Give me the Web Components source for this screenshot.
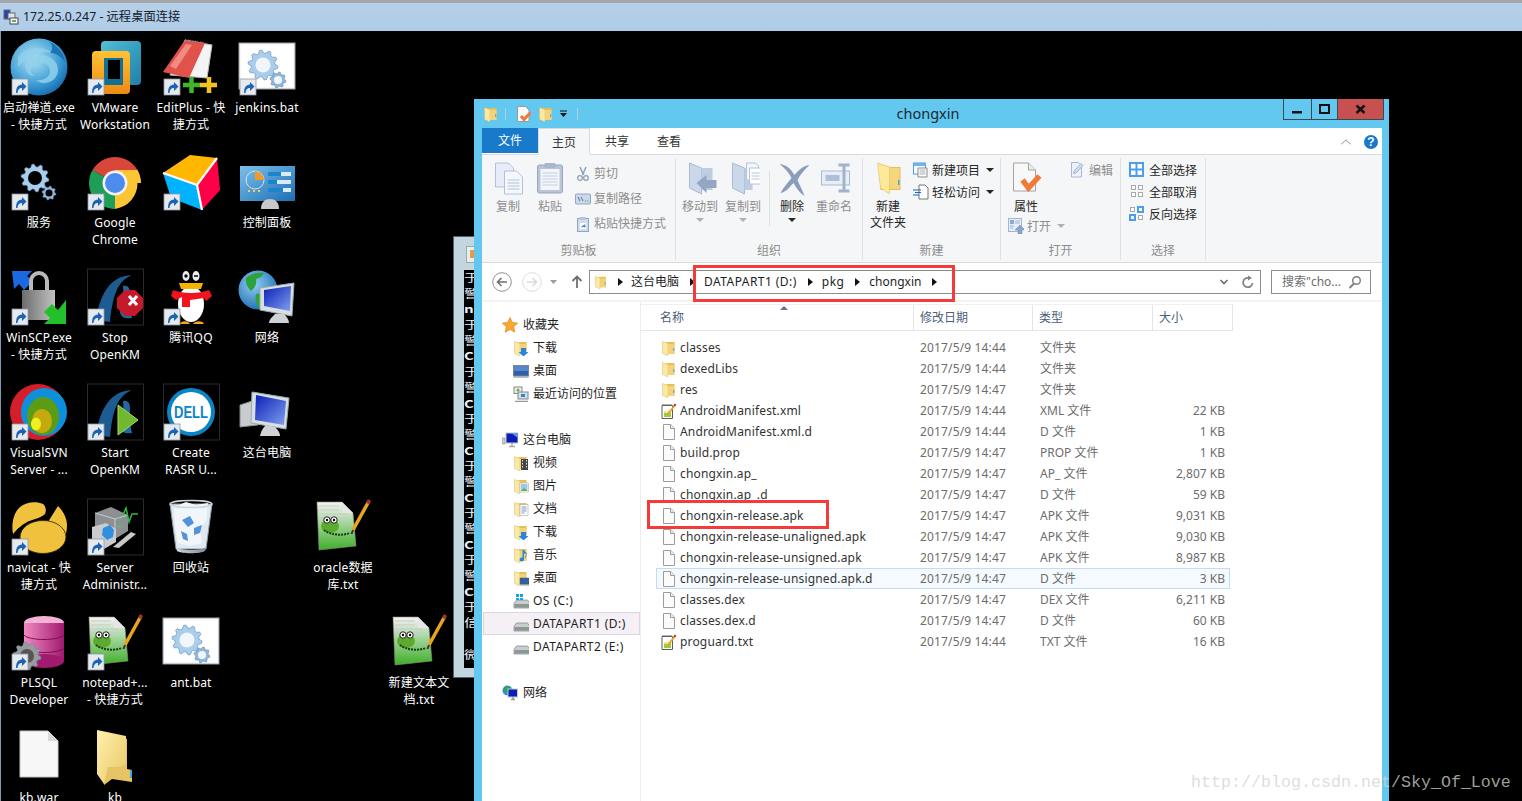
<!DOCTYPE html>
<html lang="zh-CN">
<head>
<meta charset="utf-8">
<title>172.25.0.247 - 远程桌面连接</title>
<style>
  html, body { margin: 0; height: 801px; overflow: hidden; background: #000; }
  body { display: flex; flex-direction: column; font: 12px/17px "Noto Sans", "Noto Sans CJK SC", sans-serif; }
</style>
</head>
<body>
<rdp-titlebar>172.25.0.247 - 远程桌面连接</rdp-titlebar>
<rdp-desktop></rdp-desktop>

<script>
// ---- drawing helpers ----
function gear(cx, cy, r, teeth, fill, hole) {
  let d = '';
  const n = teeth * 4;
  for (let i = 0; i < n; i++) {
    const a = (i + 0.5) / n * Math.PI * 2;
    const rr = (i % 4 < 2) ? r : r * 0.8;
    d += (i ? 'L' : 'M') + (cx + rr * Math.cos(a)).toFixed(1) + ' ' + (cy + rr * Math.sin(a)).toFixed(1);
  }
  return `<path d="${d}z" fill="${fill}" stroke="#5f86ad" stroke-width=".6"/><circle cx="${cx}" cy="${cy}" r="${r * 0.5}" fill="${hole}"/>`;
}
const svg = (w, h, vw, vh, body) => `<svg width="${w}" height="${h}" viewBox="0 0 ${vw} ${vh}" xmlns="http://www.w3.org/2000/svg">${body}</svg>`;

const shortcut = `<rect x="2" y="41" width="16" height="16" fill="#e6eaee" stroke="#8f9aa5" stroke-width=".8"/><path d="M6 55c0-6 2-8 6-8.500V44l4.500 4.500L12 53v-3c-3 0-4 1.500-4.500 5z" fill="#1c63b8"/>`;

const grad = (id, a, b, x2 = 0, y2 = 1) => `<linearGradient id="${id}" x1="0" y1="0" x2="${x2}" y2="${y2}"><stop offset="0" stop-color="${a}"/><stop offset="1" stop-color="${b}"/></linearGradient>`;

const batBody = `<rect x="1" y="5" width="56" height="46" fill="#f6f7fb" stroke="#9aa0a6"/><rect x="3" y="7" width="52" height="42" fill="#fff"/>` +
  gear(25, 27, 15, 10, '#a9cdec', '#f2f6fa') + gear(40, 42, 8, 8, '#8fb8dc', '#f2f6fa');

const nppBody = `<defs>${grad('ng', '#f4f4f4', '#3fae2a')}</defs>
  <path d="M3 4h25l11 11 3 33L5 52z" fill="url(#ng)" stroke="#8a8f80" stroke-width=".6"/>
  <path d="M28 4v11h11z" fill="#e4e6e8"/>
  <path d="M5 8h20M5 12h20M5 16h28M5 20h30" stroke="#c9c9c9"/>
  <ellipse cx="16" cy="28" rx="9" ry="7" fill="#5cab2f"/><circle cx="13" cy="22" r="3.200" fill="#fff" stroke="#222"/><circle cx="20" cy="22" r="3.200" fill="#fff" stroke="#222"/>
  <circle cx="13" cy="22" r="1.200"/><circle cx="20" cy="22" r="1.200"/>
  <path d="M10 32c6 5 18 6 26 3" stroke="#1d3a12" stroke-width="2" fill="none" stroke-dasharray="2 1"/>
  <path d="M39 32 L55 3" stroke="#e9a51c" stroke-width="3.500"/><path d="M53.500 5.500 55.500 2" stroke="#a0342c" stroke-width="3.500"/><path d="M39 32l-1.500 4" stroke="#333" stroke-width="2"/>`;

const openkm = `<rect x="1.500" y="1" width="56" height="56" fill="#000" stroke="#2a2a2a"/>
  <path d="M10 52C14 26 24 8 46 7 34 12 27 22 24 54z" fill="#1d5c92"/>
  <path d="M34 44c3-8 4-16 3-26 6-1 7 3 7 8-1 8 0 16 2 24-6 1-11 0-12-6z" fill="#23699f"/>`;

const desktopIcons = {
  chanzhi: `<defs><radialGradient id="cz" cx=".4" cy=".35" r=".75"><stop offset="0" stop-color="#b5e3f4"/><stop offset=".6" stop-color="#3f9fd6"/><stop offset="1" stop-color="#0a5ea6"/></radialGradient></defs>
    <circle cx="29" cy="29" r="28.500" fill="url(#cz)"/>
    <path d="M8 19c8-10 24-13 36-3-6-3-16-3-20 3 10-5 24 1 24 13 0 11-14 17-22 10 8 1 14-3 14-9 0-8-12-12-18-4-2 3-1 8 3 9-8 0-12-8-9-15-3 1-6 3-8 6z" fill="#8fd0ea" opacity=".85"/>
    <path d="M40 4c8 4 14 12 15 20-5-7-10-9-15-9 3-3 3-7 0-11z" fill="#1b74b6"/>`,
  vmware: `<defs>${grad('vb', '#52bfd8', '#1f7fa7', 1, 1)}${grad('vo', '#ffc233', '#ee8a12')}</defs>
    <rect x="15" y="3" width="40" height="44" rx="4" fill="url(#vb)"/><rect x="6" y="13" width="38" height="43" rx="4" fill="url(#vo)"/>
    <rect x="18" y="20" width="19" height="27" fill="#146f95"/><rect x="22" y="22" width="12" height="19" fill="#000"/>`,
  editplus: `<path d="M23 2 50 7 45 40 8 37z" fill="#f4f4f4" stroke="#bbb"/><path d="M1 34 23 2 43 5 27 40z" fill="#e0524a"/><path d="M8 28 24 6l6 1-16 24z" fill="#f08a82"/>
    <path d="M23 2 43 5" stroke="#888" stroke-dasharray="1 1.500" stroke-width="2"/>
    <path d="M21 47h17M29.500 39v16" stroke="#3fb52c" stroke-width="4.500"/><path d="M38 47h17M47 39v16" stroke="#f2c51c" stroke-width="4.500"/>`,
  bat: batBody,
  services: gear(25, 25, 14, 10, '#a9cdec', '#000') + gear(39, 40, 7, 8, '#8fb8dc', '#000'),
  chrome: `<path d="M29 30 6.500 17A26 26 0 0 1 51.500 17z" fill="#d8473a"/><path d="M29 30 6.500 17A26 26 0 0 0 29 56z" fill="#1e9e58"/><path d="M29 30H51.500A26 26 0 0 1 29 56zM29 30V17H51.500A26 26 0 0 1 55 30z" fill="#fbc534"/>
    <circle cx="29" cy="30" r="12.500" fill="#f2f2f2"/><circle cx="29" cy="30" r="10" fill="#4c8bf0"/>`,
  cube: `<path d="M1 20 28 2 55 5 35 32z" fill="#ffb700"/><path d="M1 20 35 32 40 57 9 45z" fill="#00b3ff"/><path d="M35 32 55 5 58 37 40 57z" fill="#ff0048"/>
    <path d="M1 20 35 32 55 5M35 32 40 57" stroke="#fff" stroke-width="2.200" fill="none"/>`,
  panel: `<defs>${grad('cp', '#7cc0ea', '#1d6eb4', 1, 1)}</defs><rect x="2" y="13" width="55" height="35" fill="url(#cp)"/>
    <circle cx="17" cy="27" r="9" fill="none" stroke="#cfe6f6"/><path d="M17 18a9 9 0 0 1 9 9h-9z" fill="#f09a2e"/>
    <g fill="#d8ecf8"><rect x="30" y="19" width="23" height="4"/><rect x="30" y="27" width="23" height="4"/><rect x="30" y="35" width="23" height="4"/></g>
    <g fill="#1c84cc"><rect x="30" y="19" width="13" height="4"/><rect x="30" y="27" width="9" height="4"/><rect x="30" y="35" width="15" height="4"/></g>
    <path d="M10 38h2M15 38h2M20 38h2" stroke="#f2d060" stroke-width="2"/><path d="M23 56c0-7 4-10 9-10s9 3 9 10z" fill="#c9c9c9"/>`,
  winscp: `<path d="M2 3h20L17 8l6 5-9 9-5-6-5 5z" fill="#1b68e0"/>
    <path d="M21 22v-9a8 8 0 0 1 16 0v9" fill="none" stroke="#b9b9b9" stroke-width="4"/>
    <defs>${grad('wl', '#6c6c6c', '#c2c2c2', 1, 0)}</defs><rect x="12" y="22" width="33" height="30" fill="url(#wl)"/>
    <path d="M56 32v24H34l6-6-6-6 8-8 6 6z" fill="#22c02a"/>`,
  stopkm: openkm + `<path d="M36 26h10l8 8v10l-8 8H36l-8-8V34z" transform="translate(3 -4)" fill="#c41a2c"/><path d="M43 29l8 9M51 29l-8 9" transform="translate(0 -1)" stroke="#fff" stroke-width="3"/>`,
  qq: `<ellipse cx="29" cy="32" rx="17" ry="24" fill="#000"/><ellipse cx="24" cy="8" rx="3.500" ry="5" fill="#eee"/><ellipse cx="34" cy="8" rx="3.500" ry="5" fill="#eee"/><circle cx="24" cy="8" r="1.700"/><path d="M32 8h4" stroke="#000" stroke-width="1.500"/>
    <ellipse cx="29" cy="36" rx="13" ry="18" fill="#fff"/>
    <path d="M11 22c10 4 26 4 36 0l3 6-6 5-2-3-14 2v7h-8v-10l-6 3-5-4z" fill="#f0141e"/><path d="M17 15h24l-2 6H19z" fill="#f6b400"/>
    <path d="M18 56c2-4 8-3 10 0zM31 56c2-3 9-4 11 0z" fill="#f5a623"/>`,
  network: `<defs><radialGradient id="ngl" cx=".4" cy=".35" r=".8"><stop offset="0" stop-color="#8fd0f4"/><stop offset="1" stop-color="#0d5ea8"/></radialGradient>${grad('mo', '#0a1fb8', '#7fa0ee', 1, 1)}</defs>
    <circle cx="20" cy="22" r="19.500" fill="url(#ngl)"/><path d="M8 10c6-5 12-6 18-5-2 4-5 5-8 6 1 5-1 9-5 12-3-3-6-8-5-13zM18 26c4-1 7 1 7 5 0 4-2 8-5 8-2-4-3-9-2-13z" fill="#2da23c"/>
    <path d="M22 20 56 15l-2 33-32-6z" fill="#d9dee2" stroke="#9aa"/><path d="M26 22 53 18l-1 25-26-5z" fill="url(#mo)"/><path d="M37 46c-4 4-6 6-6 9h20c0-3-2-6-5-9z" fill="#cfd3d6"/>`,
  svn: `<circle cx="28" cy="29" r="28" fill="#d41f2a"/><ellipse cx="34" cy="29" rx="23" ry="24" fill="#0d8fdc"/><ellipse cx="33" cy="33" rx="16" ry="19" fill="#5a9c14"/><ellipse cx="32" cy="38" rx="10" ry="12" fill="#c4a90f"/><ellipse cx="26" cy="41" rx="5" ry="6.500" fill="#f0f020"/>`,
  startkm: openkm + `<path d="M32 22 52 37 32 52z" fill="#6fb92e" stroke="#a6d76a"/>`,
  dell: `<rect x="1.500" y="1" width="56" height="56" fill="#000" stroke="#2a2a2a"/><circle cx="29" cy="29" r="24" fill="#0a84c6"/><circle cx="29" cy="29" r="20" fill="#fff"/>
    <text x="29" y="35" text-anchor="middle" font-family="'Liberation Sans',sans-serif" font-weight="700" font-size="16" fill="#0a84c6" textLength="34" lengthAdjust="spacingAndGlyphs">DELL</text>`,
  computer: `<defs>${grad('mo2', '#0a1fb8', '#7fa0ee', 1, 1)}</defs><path d="M2 22 20 16v26L2 44z" fill="#c9ccce" stroke="#888"/>
    <path d="M14 9 51 15 48 46 13 40z" fill="#d9dee2" stroke="#9aa"/><path d="M18 12 48 18 46 42 17 37z" fill="url(#mo2)"/><path d="M28 42c-4 4-5 7-6 11h20c0-4-3-7-5-9z" fill="#cfd3d6"/>`,
  navicat: `<g fill="#f0c13c"><path d="M3 36C1 25 4 14 10 9c6-5 16-6 23-3 2 1 4 6 2 10-6 5-12 5-18 8-5 3-9 6-14 12z"/>
    <path d="M38 24 48 8c5 5 9 12 9 19 0 5-1 9-2 12-3-7-9-12-17-15z"/></g>
    <ellipse cx="33" cy="39" rx="23" ry="16.500" fill="#f0c13c" stroke="#2a2000" stroke-width=".8"/>`,
  server: `<rect x="1.500" y="1" width="56" height="56" fill="#000" stroke="#2a2a2a"/>
    <path d="M9 15 25 9l17 8v16l-13 8-20-10z" fill="#8d8f93"/><path d="M9 15l20 6 13-4M29 21v20" stroke="#c8cacc" fill="none"/>
    <path d="M32 20l3 1M32 28l3 1" stroke="#42d45a" stroke-width="1.500"/>
    <path d="M6 29l14-4 10 6v13l-12 7-12-6z" fill="#c9cbce"/><path d="M17 30l7-3 4 5-1 7-6 3-5-5z" fill="#2f8fe0"/>
    <path d="M37 17l3-7 3 14 3-8h6" stroke="#2fb84a" stroke-width="1.500" fill="none"/><path d="M27 49 45 34l5 2-17 14z" fill="#c8c8c8"/>`,
  bin: `<defs>${grad('bb', '#cdd7e0', '#7f8a96', 1, 0)}</defs>
    <path d="M8 6h42l-6 45H14z" fill="#dfe9f2" stroke="#8f99a3"/>
    <path d="M12 9l12-5 10 3 12-2-2 18-6 8 2 14-12 3-12-3-3-16z" fill="#f2f6fa"/>
    <path d="M20 22l8-4 4 7-6 4zM32 30l8-3-2 8-6 2zM19 33l6 3 1 7-5-2z" fill="#4f93d8"/>
    <ellipse cx="29" cy="6" rx="21" ry="3.500" fill="none" stroke="#d0d5da" stroke-width="1.500"/>
    <path d="M14 49c4 4 26 4 30 0l-1 4c-4 3-24 3-28 0z" fill="url(#bb)"/>`,
  npp: nppBody,
  plsql: `<defs>${grad('db', '#f28ac2', '#a01a70', 1, 0)}</defs><ellipse cx="34" cy="10" rx="20" ry="7" fill="#f3b2d6"/><rect x="14" y="10" width="40" height="38" fill="url(#db)"/><ellipse cx="34" cy="48" rx="20" ry="7" fill="#a01a70"/>
    <path d="M14 22c5 6 35 6 40 0M14 35c5 6 35 6 40 0" stroke="#7a0f54" fill="none"/>` + gear(17, 43, 14, 10, '#9b9b9b', '#555'),
  blank: `<path d="M10 3h28l10 10v36H10z" fill="#f7f7f7" stroke="#c8c8c8"/><path d="M38 3v10h10z" fill="#d9d9d9"/>`,
  folder: `<defs>${grad('fo', '#fff0ad', '#e8c866', 1, 1)}</defs><path d="M16 8l25 3v30l5 1v12l-20-3-8 6z" fill="#e6c463"/><path d="M11 2 40 8v28l-6 3-12 0-4 17L11 46z" fill="url(#fo)"/><rect x="44" y="42" width="2" height="8" fill="#4aa3df"/>`
};

// small icons, 16x16
const smallFolder = `<path d="M1.500 3 8 2h5.500v12H3z" fill="#e8bf56"/><path d="M1.500 1.500 7 3.500V16L1.500 13.500z" fill="#fbe9a3" stroke="#d4b15a" stroke-width=".4"/><path d="M7 4h6.500v10H7z" fill="#f2d37a"/><rect x="12.200" y="8" width="1" height="3" fill="#5a9fd4"/>`;
const smallDrive = `<path d="M1 10.500 3.500 7h11L17 10.500V15H1z" fill="#c9cdcf" stroke="#7c8185" stroke-width=".7"/><path d="M1.400 11h15.200v3.600H1.400z" fill="#8f9699"/><rect x="13" y="12" width="2" height="1.500" fill="#58c04a"/>`;
const smallIcons = {
  folder: smallFolder,
  file: `<path d="M2.500.5h7.300l3.700 3.700v11.300h-11z" fill="#fcfbfc" stroke="#9c9c9c"/><path d="M9.500.5v4h4" fill="#eee" stroke="#9c9c9c"/>`,
  note: `<path d="M1 2.500h10.500V15.500H1z" fill="#fff" stroke="#5c5c5c"/><path d="M2 1v2M4 1v2M6 1v2M8 1v2M10 1v2" stroke="#666"/><path d="M3 8h7v6H3z" fill="#9ccb3c"/><path d="M3 8h7v2H3z" fill="#f2ec70"/><path d="M7 11 14 2" stroke="#ef9f22" stroke-width="2"/><path d="M13.300 2.800 14.600 1.200" stroke="#a33" stroke-width="2"/>`,
  star: `<path d="M8 .5l2.300 5 5.400.6-4 3.700 1.100 5.400L8 12.500l-4.800 2.700 1.100-5.400-4-3.700 5.400-.6z" fill="#f8a92c" stroke="#d97a1a" stroke-width=".6"/>`,
  downloads: smallFolder + `<path d="M8 8h5v4h2.500l-5 4.500-5-4.500H8z" fill="#2a86dc"/>`,
  desk: `<rect x=".5" y="2.500" width="15" height="10.500" fill="#2f5fa8" stroke="#7a8591"/><path d="M1 3h14v5H1z" fill="#5687cb"/><rect x=".5" y="13" width="15" height="1.800" fill="#a9b0b7"/>`,
  deskf: smallFolder + `<rect x="7" y="8" width="9" height="6" fill="#2f5fa8" stroke="#555" stroke-width=".5"/><rect x="7" y="14" width="9" height="1.500" fill="#999"/>`,
  recent: `<rect x="1" y="1" width="8" height="6.500" fill="#eee" stroke="#888"/><rect x="5" y="6" width="10" height="7" fill="#cfe0ee" stroke="#888"/><rect x="8" y="8" width="4" height="3" fill="#3b83c4"/><path d="M2 15.500h13" stroke="#999" stroke-width="1.500"/><circle cx="5" cy="4" r="1.500" fill="#6bb04a"/>`,
  pc: `<rect x="0" y="6" width="3" height="6" fill="#cfcfcf" stroke="#777" stroke-width=".5"/><rect x="4" y="1" width="12" height="10" fill="#0a1fb8" stroke="#bfc5ca"/><path d="M9 1h7v5z" fill="#6b8fe8"/><path d="M7 14.500h6M10 11v3" stroke="#aaa" stroke-width="1.500"/>`,
  video: smallFolder + `<rect x="8" y="4" width="7" height="11" fill="#444"/><path d="M9 5h1v1.500H9zM13 5h1v1.500h-1zM9 8h1v1.500H9zM13 8h1v1.500h-1zM9 11h1v1.500H9zM13 11h1v1.500h-1z" fill="#ddd"/>`,
  pics: smallFolder + `<rect x="7" y="5" width="8.500" height="9" fill="#fff" stroke="#999" stroke-width=".5"/><rect x="8" y="6" width="6.500" height="7" fill="#9cc7e8"/><path d="M8 13l3-3 3.500 3z" fill="#6aa84a"/>`,
  docs: smallFolder + `<rect x="7" y="3.500" width="8" height="11" fill="#fff" stroke="#999" stroke-width=".5"/><path d="M8.500 6h5M8.500 8h5M8.500 10h5M8.500 12h3" stroke="#5a7fb0" stroke-width=".8"/>`,
  music: smallFolder + `<path d="M11 3v9.500a2.200 2 0 1 1-1.500-1.900V3h1.500c1 2 3 2.500 3 5-1-1.500-2-1.500-3-1.500z" fill="#2a86dc"/>`,
  os: smallDrive + `<path d="M3 1h3v3H3zM7 1h3v3H7zM3 5h3v2H3zM7 5h3v2H7z" fill="#12a5e6"/>`,
  drive: smallDrive,
  net: `<circle cx="5.500" cy="5.500" r="5" fill="#2b8fd4"/><path d="M2 3c2-2 5-2 6-1L6 5 4 8zM6 7l2 1-1 2.500z" fill="#37a63a"/><rect x="6" y="4" width="9.500" height="8" fill="#0a1fb8" stroke="#c5cbd0"/><path d="M9 14.500h4M11 12v2.500" stroke="#999" stroke-width="1.500"/>`,
  qdoc: `<path d="M1.500.5h8l3.500 3.500v11.500h-11.500z" fill="#fafafa" stroke="#9a9a9a"/><path d="M5 10l3 3.500 6.500-7" stroke="#ee7a3c" stroke-width="3" fill="none"/>`,
  cut: `<path d="M5 1l3.500 8M11 1 7.500 9" stroke="#8fa0b6" stroke-width="1.500"/><circle cx="5" cy="12" r="2.300" fill="none" stroke="#8fa0b6" stroke-width="1.300"/><circle cx="11" cy="12" r="2.300" fill="none" stroke="#8fa0b6" stroke-width="1.300"/>`,
  copypath: `<rect x=".5" y="3" width="15" height="10" rx="1" fill="#c9d8ec" stroke="#93a6c4"/><path d="M3 6l2 4M6 6l2 4M10 10h1M12.500 10h1" stroke="#5f7390"/>`,
  pasteshort: `<rect x="2.500" y="2.500" width="11" height="13" fill="#cfdcee" stroke="#93a6c4"/><rect x="5" y="1" width="6" height="3" fill="#b7c6dc"/><rect x="5" y="7" width="6" height="6" fill="#fff"/><path d="M6.500 12c0-2 1-3 2.500-3v-1l2 2-2 2v-1c-1 0-1.500.2-2.500 1z" fill="#5f88bd"/>`,
  newitem: `<rect x=".5" y="1" width="12" height="11" fill="#f5fbff" stroke="#4e9bd8"/><path d="M.5 1h12v3H.5z" fill="#73b4e6"/><path d="M5 6h9v9H5z" fill="#fff" stroke="#8a8a8a"/><path d="M6.500 8h6M6.500 10h6M6.500 12h6" stroke="#aaa"/>`,
  easy: `<path d="M6 1h6l3 3v11H6z" fill="#fff" stroke="#777"/><path d="M0 6h8M2 8.500h6M0 11h6" stroke="#1766c2" stroke-width="1.200"/>`,
  open: `<rect x=".5" y=".5" width="13" height="13" fill="#e4edf8" stroke="#a4b5cc"/><rect x="2" y="2" width="4" height="4" fill="#8fa9cb"/><path d="M7 3h5M7 5h5M2 8h4M2 10h3" stroke="#a4b5cc"/><path d="M12 7l5 5h-3v4h-4v-4H7z" fill="#8ba6c8" stroke="#6f8cb1" stroke-width=".5"/>`,
  edit: `<path d="M1.500.5h7l3 3v11.500h-10z" fill="#edf2fa" stroke="#a8b8d0"/><path d="M3.500 11.500 4 9l7-7.500 2 2L6 11z" fill="#cfdcee" stroke="#8fa5c4" stroke-width=".7"/>`,
  selall: `<rect width="15" height="15" fill="#4a9df0"/><g fill="#fff"><rect x="2" y="2" width="4.500" height="4.500"/><rect x="8.500" y="2" width="4.500" height="4.500"/><rect x="2" y="8.500" width="4.500" height="4.500"/><rect x="8.500" y="8.500" width="4.500" height="4.500"/></g>`,
  selnone: `<g fill="#fff" stroke="#a8a8a8"><rect x="2.500" y="1.500" width="4" height="4"/><rect x="9.500" y="1.500" width="4" height="4"/><rect x="2.500" y="8.500" width="4" height="4"/><rect x="9.500" y="8.500" width="4" height="4"/></g>`,
  selinv: `<g fill="#fff" stroke="#a8a8a8"><rect x="1.500" y="1.500" width="4" height="4"/><rect x="9.500" y="9.500" width="4" height="4"/></g><rect x="8" y="0" width="7" height="7" fill="#4a9df0"/><rect x="10" y="2" width="3" height="3" fill="#fff"/><rect x="0" y="8" width="7" height="7" fill="#4a9df0"/><rect x="2" y="10" width="3" height="3" fill="#fff"/>`
};
const small = (n, s = 16) => svg(s, s, 16, 16, smallIcons[n]);

// big ribbon icons, 32x32
const pale = 'fill="#e6edf8" stroke="#b3c2da"';
const bigIcons = {
  copy: `<path d="M2 1h13l5 5v19H2z" ${pale}/><path d="M11 9h12l6 6v17H11z" fill="#f4f7fc" stroke="#b3c2da"/><path d="M14 18h12M14 21h12M14 24h12M14 27h12" stroke="#b3c2da"/>`,
  paste: `<rect x="2" y="3" width="25" height="28" rx="2" fill="#b9c6d8" stroke="#96a6bd"/><rect x="5" y="7" width="19" height="21" fill="#f2f5fa"/><path d="M7 11h15M7 14h15M7 17h15M7 20h15M7 23h15" stroke="#c5d0e0"/><rect x="9" y="1" width="11" height="5" rx="1" fill="#a8b7cc"/>`,
  move: `<path d="M4 1 16 6v26L4 26z" fill="#cbd7ea" stroke="#aabbd4"/><path d="M16 6h11v22H16z" fill="#bfcde2"/><path d="M15 20l10-8v5h10v8H25v5z" transform="translate(-4 1)" fill="#93a6c2"/>`,
  copyto: `<path d="M4 1 16 6v26L4 26z" fill="#cbd7ea" stroke="#aabbd4"/><path d="M16 6h8v22h-8z" fill="#bfcde2"/><path d="M18 1h9l3 3v14H18z" fill="#f4f7fc" stroke="#b3c2da"/><path d="M21 6h10l2 2v14H21z" fill="#fff" stroke="#b3c2da"/><path d="M23 11h8M23 14h8M23 17h8" stroke="#b3c2da"/>`,
  del: `<path d="M2 2c8 1 12 6 15 11C21 8 26 4 32 3 28 7 23 12 20 18c2 5 5 10 7 16-5-3-8-8-11-13C12 25 9 30 3 31c3-6 8-11 11-15C11 10 7 6 2 2z" fill="#8a9dbd"/>`,
  rename: `<rect x="2" y="9" width="28" height="14" fill="#e8eef8" stroke="#a9bad4"/><rect x="6" y="13" width="14" height="6" fill="#aebfd8"/><path d="M19 3h11M19 29h11M24.500 3v26" stroke="#a0b2cf" stroke-width="3"/>`,
  newf: `<path d="M5 1 16 5h11v23H7z" fill="#e8be58"/><path d="M4 1 16 5v27L7 26z" fill="#fde998" stroke="#d9b85c" stroke-width=".5"/><path d="M16 6h10v21H16z" fill="#f5d67c"/><rect x="24.500" y="18" width="1.500" height="5" fill="#4aa3df"/>`,
  props: `<path d="M2 1h15l7 7v21H2z" fill="#f8f8f8" stroke="#a3a3a3"/><path d="M17 1v7h7" fill="#e9e9e9" stroke="#a3a3a3"/><path d="M11 18l6 8 11-12" stroke="#ee7a3c" stroke-width="5.500" fill="none"/>`
};
const big = n => svg(34, 34, 34, 34, `<g transform="translate(2.500 0)">${bigIcons[n]}</g>`);

// ---- components ----
class RdpTitlebar extends HTMLElement {
  connectedCallback() {
    this.attachShadow({ mode: 'open' }).innerHTML = `
      <style>
        :host { display: flex; align-items: center; flex: 0 0 auto; box-sizing: border-box; height: 31px; padding: 0 0 1px 3px; gap: 4px;
          border-top: 3px solid #a5a6a8; background: linear-gradient(#b6d0e9, #afcce6); color: #14202c; font-size: 12.300px; }
        svg { display: block; }
      </style>
      ${svg(16, 16, 16, 16, `<rect x="1" y="1" width="6" height="9" fill="#1f47a8" stroke="#667"/><rect x="5" y="4" width="7" height="6" fill="#dfe6ee" stroke="#667"/><rect x="7" y="9" width="8" height="6" fill="#f4f4f4" stroke="#445"/><path d="M9 12h4" stroke="#2a9c2a" stroke-width="1.500"/>`)}
      <slot></slot>`;
  }
}
customElements.define('rdp-titlebar', RdpTitlebar);

class DesktopIcon extends HTMLElement {
  connectedCallback() {
    const col = +this.getAttribute('col'), row = +this.getAttribute('row');
    const lines = (this.getAttribute('label') || '').split('|');
    this.style.left = (1 + col * 76) + 'px';
    this.style.top = (7 + row * 115) + 'px';
    this.attachShadow({ mode: 'open' }).innerHTML = `
      <style>
        :host { position: absolute; display: flex; flex-direction: column; align-items: center; width: 76px; color: #fff; }
        svg { display: block; overflow: visible; }
        .label { margin-top: 3px; text-align: center; line-height: 17px; white-space: nowrap; letter-spacing: .15px; }
      </style>
      ${svg(58, 58, 58, 58, desktopIcons[this.getAttribute('icon')] + (this.hasAttribute('shortcut') ? shortcut : ''))}
      <div class="label">${lines.join('<br>')}</div>`;
  }
}
customElements.define('desktop-icon', DesktopIcon);

class ConsoleWindow extends HTMLElement {
  connectedCallback() {
    const lines = ['于', '警', 'ng', '于', '警', 'C:', '于', '警', 'C:', '于', '警', 'C:', '于', '警', 'C:', '于', '警', 'C:', '于', '警', 'C:', '于', '信', '', '微'];
    this.attachShadow({ mode: 'open' }).innerHTML = `
      <style>
        :host { position: absolute; left: 453px; top: 205px; box-sizing: border-box; width: 32px; height: 442px; padding: 9px 0 9px 10px;
          background: #c3d5de; border: 1px solid #55606a; display: flex; flex-direction: column; gap: 7px; overflow: hidden; }
        .ico { height: 15px; width: 14px; margin-left: 2px; background: #e9edf0; border: 1px solid #9aa; }
        .ico::after { content: ""; display: block; width: 6px; height: 8px; margin: 3px; background: #e89a3c; }
        .con { flex: 1; background: #000; color: #f0f0f0; overflow: hidden; }
        .con div { height: 15.700px; font: 400 10.800px/15.700px "Noto Sans CJK SC", sans-serif; white-space: nowrap; transform: scaleX(1.4); transform-origin: left center; }
        .con div.b { font-weight: 700; }
      </style>
      <div class="ico"></div>
      <div class="con">${lines.map(l => `<div class="${/[a-zA-Z]/.test(l) ? 'b' : ''}">${l}</div>`).join('')}</div>`;
  }
}
customElements.define('console-window', ConsoleWindow);

class RibbonGroup extends HTMLElement {
  connectedCallback() {
    this.attachShadow({ mode: 'open' }).innerHTML = `
      <style>
        :host { display: flex; flex-direction: column; box-sizing: border-box; height: 102px; margin-top: 3px; border-right: 1px solid #e0e1e3; }
        .body { flex: 1; display: flex; margin-top: -3px; min-height: 0; }
        .name { flex: 0 0 auto; height: 18px; line-height: 18px; text-align: center; color: #8d8d8d; }
      </style>
      <div class="body"><slot></slot></div>
      <div class="name">${this.getAttribute('label')}</div>`;
  }
}
customElements.define('ribbon-group', RibbonGroup);

class ExplorerRibbon extends HTMLElement {
  connectedCallback() {
    const bigBtn = (icon, label, w, dark, arrow) => `
      <div class="big ${dark ? 'dark' : ''}" style="width:${w}px">${big(icon)}<span>${label}</span>${arrow ? `<i class="tri ${dark ? 'k' : ''}"></i>` : ''}</div>`;
    const row = (icon, label, cls = '', drop = false) => `
      <div class="row ${cls}">${small(icon)}<span>${label}</span>${drop ? '<i class="tri k"></i>' : ''}</div>`;
    this.attachShadow({ mode: 'open' }).innerHTML = `
      <style>
        :host { display: block; flex: 0 0 auto; }
        svg { display: block; flex: 0 0 auto; }
        .tabs { display: flex; align-items: flex-end; height: 27px; position: relative; border-bottom: 1px solid #d9dadb; box-sizing: border-box; background: #fff; color: #333; }
        .tab { width: 52px; height: 27px; line-height: 29px; text-align: center; box-sizing: border-box; }
        .file { width: 56px; height: 25px; margin-bottom: 1px; background: #1979ca; color: #fff; line-height: 25px; align-self: flex-start; margin-top: 0; }
        .home { height: 27px; line-height: 27px; margin-bottom: -1px; border: 1px solid #d9dadb; border-bottom: 1px solid #f5f6f7; background: #f5f6f7; }
        .share { margin-left: 1px; }
        .spring { flex: 1; }
        .chev { width: 7px; height: 7px; border-left: 1.500px solid #9a9a9a; border-top: 1.500px solid #9a9a9a; transform: scale(.9,.8) rotate(45deg); margin: 0 14px 6px 0; }
        .help { width: 14px; height: 14px; margin: 0 4px 5px 0; border-radius: 50%; background: #1b77c9; color: #fff; font: 700 12px/14px "Liberation Sans", sans-serif; text-align: center; }
        .bar { display: flex; height: 108px; background: #f5f6f7; border-bottom: 1px solid #dadbdc; box-sizing: border-box; color: #8d8d8d; }
        .big { display: flex; flex-direction: column; align-items: center; padding-top: 7px; line-height: 16px; text-align: center; box-sizing: border-box; flex: 0 0 auto; }
        .big span { margin-top: 3px; }
        .dark { color: #262626; }
        .tri { display: block; width: 0; height: 0; margin: 3px auto 0; border: 4px solid transparent; border-bottom: 0; border-top-color: #b0b0b0; }
        .tri.k { border-top-color: #262626; }
        .col { display: flex; flex-direction: column; flex: 0 0 auto; }
        .row { display: flex; align-items: center; gap: 3px; height: 22px; white-space: nowrap; }
        .row.k { color: #262626; }
        .row .tri { margin: 0 0 0 3px; }
        .vr { width: 1px; height: 55px; margin: 16px 1px 0 5px; background: #dfe0e2; flex: 0 0 auto; }
        .clip .row { height: 25px; }
        .sel .row { gap: 4px; }
      </style>
      <div class="tabs">
        <div class="tab file">文件</div><div class="tab home">主页</div><div class="tab share">共享</div><div class="tab">查看</div>
        <div class="spring"></div><div class="chev"></div><div class="help">?</div>
      </div>
      <div class="bar">
        <ribbon-group label="剪贴板" style="width:194px">
          <div style="width:4px"></div>
          ${bigBtn('copy', '复制', 44)}${bigBtn('paste', '粘贴', 40)}
          <div class="col clip" style="margin:6px 0 0 5px">
            ${row('cut', '剪切')}${row('copypath', '复制路径')}${row('pasteshort', '粘贴快捷方式')}
          </div>
        </ribbon-group>
        <ribbon-group label="组织" style="width:187px">
          <div style="width:2px"></div>
          ${bigBtn('move', '移动到', 44, false, true)}${bigBtn('copyto', '复制到', 42, false, true)}
          <div class="vr"></div>
          ${bigBtn('del', '删除', 42, true, true)}${bigBtn('rename', '重命名', 42)}
        </ribbon-group>
        <ribbon-group label="新建" style="width:138px">
          <div style="width:3px"></div>
          ${bigBtn('newf', '新建<br>文件夹', 44, true)}
          <div class="col" style="margin:4px 0 0 3px">
            ${row('newitem', '新建项目', 'k', true)}${row('easy', '轻松访问', 'k', true)}
          </div>
        </ribbon-group>
        <ribbon-group label="打开" style="width:120px">
          <div class="col" style="width:67px;padding-left:2px">
            ${bigBtn('props', '属性', 46, true)}
            <div class="row" style="margin:0 0 0 5px;gap:3px">${small('open')}<span>打开</span><i class="tri" style="margin-left:-5px;transform:translateX(8px)"></i></div>
          </div>
          <div class="col" style="margin-top:4px">${row('edit', '编辑')}</div>
        </ribbon-group>
        <ribbon-group label="选择" style="width:85px">
          <div class="col sel k" style="margin:4px 0 0 8px">
            ${row('selall', '全部选择', 'k')}${row('selnone', '全部取消', 'k')}${row('selinv', '反向选择', 'k')}
          </div>
        </ribbon-group>
      </div>`;
  }
}
customElements.define('explorer-ribbon', ExplorerRibbon);

class AddressBar extends HTMLElement {
  connectedCallback() {
    const crumb = (t, cls = '') => `<span class="t ${cls}">${t}</span><i class="sep"></i>`;
    this.attachShadow({ mode: 'open' }).innerHTML = `
      <style>
        :host { display: flex; align-items: center; flex: 0 0 auto; height: 37px; padding: 0 11px 0 10px; box-sizing: border-box; color: #1e1e1e; }
        svg { display: block; flex: 0 0 auto; }
        .nav { margin-right: 10px; }
        .box { display: flex; align-items: center; box-sizing: border-box; height: 24px; border: 1px solid #8d8d8d; background: #fff; }
        .crumbs { width: 672px; padding-left: 4px; margin-left: 5px; }
        .sep { width: 0; height: 0; margin: 0 9px 0 11px; border: 4px solid transparent; border-left: 5px solid #111; border-right: 0; }
        .t { white-space: nowrap; }
        .wide { letter-spacing: .45px; }
        .spring { flex: 1; }
        .search { width: 100px; margin-left: 10px; padding: 0 8px 0 10px; color: #6d6d6d; justify-content: space-between; }
      </style>
      <div class="nav">${svg(20, 20, 20, 20, `<circle cx="10" cy="10" r="9.300" fill="#fff" stroke="#8f8f8f"/><path d="M15 10H6M9.500 6 5.500 10l4 4" stroke="#6f6f6f" stroke-width="1.600" fill="none"/>`)}</div>
      <div class="nav" style="margin-right:7px">${svg(20, 20, 20, 20, `<circle cx="10" cy="10" r="9.300" fill="#fff" stroke="#dcdcdc"/><path d="M5 10h9M10.500 6l4 4-4 4" stroke="#dadada" stroke-width="1.600" fill="none"/>`)}</div>
      <div class="nav" style="margin-right:11px">${svg(10, 20, 10, 20, `<path d="M1 8h7l-3.500 4z" fill="#9b9b9b"/>`)}</div>
      ${svg(14, 20, 14, 20, `<path d="M7 16V5M2.500 9 7 4.500 11.500 9" stroke="#6f6f6f" stroke-width="1.800" fill="none"/>`)}
      <div class="box crumbs">
        ${svg(14, 16, 16, 16, smallFolder)}<i class="sep" style="margin:0 8px 0 10px"></i>
        ${crumb('这台电脑')}${crumb('DATAPART1 (D:)', 'wide')}${crumb('pkg', 'wide')}${crumb('chongxin')}
        <span class="spring"></span>
        ${svg(10, 10, 10, 10, `<path d="M1.500 3 5 6.500 8.500 3" stroke="#707070" stroke-width="1.700" fill="none"/>`)}
        <span style="width:12px"></span>
        ${svg(14, 14, 14, 14, `<path d="M11.500 8A4.700 4.700 0 1 1 8 3" stroke="#808080" stroke-width="1.700" fill="none"/><path d="M7 .5 11 3 7 5.500z" fill="#808080"/>`)}
        <span style="width:5px"></span>
      </div>
      <div class="box search"><span class="t">搜索"cho...</span>
        ${svg(14, 14, 14, 14, `<circle cx="8.500" cy="5.500" r="3.800" fill="none" stroke="#808080" stroke-width="1.500"/><path d="M6 8.500 1.500 13" stroke="#808080" stroke-width="2"/>`)}
      </div>`;
  }
}
customElements.define('address-bar', AddressBar);

class NavPane extends HTMLElement {
  connectedCallback() {
    const item = (icon, label, cls = '') => `<div class="item ${cls}">${small(icon)}<span class="${/[A-Z]/.test(label) ? 'wide' : ''}">${label}</span></div>`;
    this.attachShadow({ mode: 'open' }).innerHTML = `
      <style>
        :host { display: flex; flex-direction: column; flex: 0 0 auto; box-sizing: border-box; width: 159px; padding: 11px 0 0 1px; border-right: 1px solid #ededed; color: #1e1e1e; }
        svg { display: block; flex: 0 0 auto; }
        .item { display: flex; align-items: center; box-sizing: border-box; height: 23px; gap: 4px; white-space: nowrap; }
        .root { padding-left: 19px; gap: 5px; }
        .sub { padding-left: 30px; }
        .sel { height: 23px; margin-right: 0; background: #f5f0f6; border: 1px solid #dcd7de; padding-left: 29px; }
        .gap { height: 23px; }
        .wide { letter-spacing: .45px; }
      </style>
      ${item('star', '收藏夹', 'root')}${item('downloads', '下载', 'sub')}${item('desk', '桌面', 'sub')}${item('recent', '最近访问的位置', 'sub')}
      <div class="gap"></div>
      ${item('pc', '这台电脑', 'root')}${item('video', '视频', 'sub')}${item('pics', '图片', 'sub')}${item('docs', '文档', 'sub')}${item('downloads', '下载', 'sub')}${item('music', '音乐', 'sub')}${item('deskf', '桌面', 'sub')}${item('os', 'OS (C:)', 'sub')}
      ${item('drive', 'DATAPART1 (D:)', 'sub sel')}${item('drive', 'DATAPART2 (E:)', 'sub')}
      <div class="gap"></div>
      ${item('net', '网络', 'root')}`;
  }
}
customElements.define('nav-pane', NavPane);

class FileList extends HTMLElement {
  connectedCallback() {
    const files = [
      ['folder', 'classes', '14:44', '文件夹', ''],
      ['folder', 'dexedLibs', '14:44', '文件夹', ''],
      ['folder', 'res', '14:47', '文件夹', ''],
      ['note', 'AndroidManifest.xml', '14:44', 'XML 文件', '22 KB'],
      ['file', 'AndroidManifest.xml.d', '14:44', 'D 文件', '1 KB'],
      ['file', 'build.prop', '14:47', 'PROP 文件', '1 KB'],
      ['file', 'chongxin.ap_', '14:47', 'AP_ 文件', '2,807 KB'],
      ['file', 'chongxin.ap_.d', '14:47', 'D 文件', '59 KB'],
      ['file', 'chongxin-release.apk', '14:47', 'APK 文件', '9,031 KB'],
      ['file', 'chongxin-release-unaligned.apk', '14:47', 'APK 文件', '9,030 KB'],
      ['file', 'chongxin-release-unsigned.apk', '14:47', 'APK 文件', '8,987 KB'],
      ['file', 'chongxin-release-unsigned.apk.d', '14:47', 'D 文件', '3 KB', 'hot'],
      ['file', 'classes.dex', '14:47', 'DEX 文件', '6,211 KB'],
      ['file', 'classes.dex.d', '14:47', 'D 文件', '60 KB'],
      ['note', 'proguard.txt', '14:44', 'TXT 文件', '16 KB']
    ];
    this.attachShadow({ mode: 'open' }).innerHTML = `
      <style>
        :host { display: block; flex: 1; min-width: 0; }
        svg { display: block; flex: 0 0 auto; }
        .cols { display: grid; grid-template-columns: 258px 119px 120px 80px; }
        .head { height: 27px; margin-top: 2px; border-top: 1px solid #f0f0f0; border-bottom: 1px solid #e5e5e5; box-sizing: border-box; width: 592px; position: relative; color: #4c607a; line-height: 26px; padding-left: 15px; margin-bottom: 6px; }
        .head div { padding-left: 6px; border-right: 1px solid #e5e5e5; }
        .head div:first-of-type { padding-left: 4px; }
        .arrow { position: absolute; left: 139px; top: 1px; width: 0; height: 0; border: 4px solid transparent; border-top: 0; border-bottom-color: #5a7390; }
        .file { height: 21px; margin-left: 15px; width: 574px; box-sizing: border-box; color: #6d6d6d; line-height: 19px; border: 1px solid transparent; grid-template-columns: 257px 119px 120px 76px; align-items: center; }
        .file.hot { background: #f5fafe; border-color: #c0dbfb; }
        .name { display: flex; align-items: center; gap: 3px; padding-left: 4px; color: #333; white-space: nowrap; letter-spacing: .17px; }
        .date { padding-left: 6px; letter-spacing: .15px; }
        .type { padding-left: 7px; }
        .size { text-align: right; padding-right: 4px; }
      </style>
      <div class="head cols"><i class="arrow"></i><div>名称</div><div>修改日期</div><div>类型</div><div>大小</div></div>
      ${files.map(f => `<div class="file cols ${f[5] || ''}">
        <div class="name">${small(f[0])}<span>${f[1]}</span></div>
        <div class="date">2017/5/9 ${f[2]}</div><div class="type">${f[3]}</div><div class="size">${f[4]}</div>
      </div>`).join('')}`;
  }
}
customElements.define('file-list', FileList);

class ExplorerWindow extends HTMLElement {
  connectedCallback() {
    this.attachShadow({ mode: 'open' }).innerHTML = `
      <style>
        :host { position: absolute; left: 474px; top: 68px; width: 915px; height: 702px; box-sizing: border-box; display: flex; flex-direction: column; background: #62c8f0; padding: 0 7px 0 8px; }
        svg { display: block; flex: 0 0 auto; }
        .title { display: flex; align-items: center; flex: 0 0 auto; height: 29px; position: relative; }
        .qat { display: flex; align-items: center; }
        .qsep { width: 1px; height: 12px; background: #a9d3e4; }
        .caption { position: absolute; left: 0; right: 8px; top: 4px; text-align: center; font-size: 14.500px; line-height: 20px; color: #1a2a33; }
        .ctl { position: absolute; right: -2px; top: 0; display: flex; height: 20px; border: 1px solid #3c4a50; border-top: 0; box-sizing: content-box; }
        .ctl div { display: flex; align-items: center; justify-content: center; border-right: 1px solid #3c4a50; }
        .ctl div:last-child { border: 0; background: #c75050; }
        .inner { flex: 1; min-height: 0; background: #fff; display: flex; flex-direction: column; }
        .panes { flex: 1; display: flex; min-height: 0; border-top: 2px solid #f6f2f3; }
      </style>
      <div class="title">
        <div class="qat" style="margin-left:1px">${small('folder')}<span style="width:6px"></span><i class="qsep"></i><span style="width:10px"></span>${small('qdoc')}<span style="width:6px"></span>${small('folder')}<span style="width:5px"></span>
          ${svg(9, 9, 9, 9, `<path d="M1 2h7" stroke="#111"/><path d="M1 4h7L4.500 8z" fill="#111"/>`)}
          <span style="width:9px"></span><i class="qsep"></i></div>
        <div class="caption">chongxin</div>
        <div class="ctl">
          <div style="width:27px">${svg(11, 11, 11, 11, `<rect y="7" width="10" height="2.500" fill="#111"/>`)}</div>
          <div style="width:25px">${svg(11, 11, 11, 11, `<rect x="1" y="1" width="9" height="8" fill="none" stroke="#111" stroke-width="2"/>`)}</div>
          <div style="width:45px">${svg(11, 11, 11, 11, `<path d="M1.500 1.500l8 7.500M9.500 1.500l-8 7.500" stroke="#111" stroke-width="2.400"/>`)}</div>
        </div>
      </div>
      <div class="inner">
        <explorer-ribbon></explorer-ribbon>
        <address-bar></address-bar>
        <div class="panes"><nav-pane></nav-pane><file-list></file-list></div>
      </div>
      <slot></slot>`;
  }
}
customElements.define('explorer-window', ExplorerWindow);

class RedMark extends HTMLElement {
  connectedCallback() {
    const a = ['x', 'y', 'w', 'h'].map(k => this.getAttribute(k) + 'px');
    this.attachShadow({ mode: 'open' }).innerHTML = `
      <style>
        :host { position: absolute; left: ${a[0]}; top: ${a[1]}; width: ${a[2]}; height: ${a[3]}; box-sizing: border-box; border: 3px solid #f53a3a; pointer-events: none; }
      </style>`;
  }
}
customElements.define('red-mark', RedMark);

class RdpDesktop extends HTMLElement {
  connectedCallback() {
    const list = [
      [0, 0, 'chanzhi', '启动禅道.exe|- 快捷方式', 1], [1, 0, 'vmware', 'VMware|Workstation', 1], [2, 0, 'editplus', 'EditPlus - 快|捷方式', 1], [3, 0, 'bat', 'jenkins.bat', 1],
      [0, 1, 'services', '服务', 1], [1, 1, 'chrome', 'Google|Chrome', 1], [2, 1, 'cube', '', 1], [3, 1, 'panel', '控制面板', 0],
      [0, 2, 'winscp', 'WinSCP.exe|- 快捷方式', 1], [1, 2, 'stopkm', 'Stop|OpenKM', 1], [2, 2, 'qq', '腾讯QQ', 1], [3, 2, 'network', '网络', 0],
      [0, 3, 'svn', 'VisualSVN|Server - ...', 1], [1, 3, 'startkm', 'Start|OpenKM', 1], [2, 3, 'dell', 'Create|RASR U...', 1], [3, 3, 'computer', '这台电脑', 0],
      [0, 4, 'navicat', 'navicat - 快|捷方式', 1], [1, 4, 'server', 'Server|Administr...', 1], [2, 4, 'bin', '回收站', 0], [4, 4, 'npp', 'oracle数据|库.txt', 0],
      [0, 5, 'plsql', 'PLSQL|Developer', 1], [1, 5, 'npp', 'notepad+...|- 快捷方式', 1], [2, 5, 'bat', 'ant.bat', 0], [5, 5, 'npp', '新建文本文|档.txt', 0],
      [0, 6, 'blank', 'kb.war', 0], [1, 6, 'folder', 'kb', 0]
    ];
    this.attachShadow({ mode: 'open' }).innerHTML = `
      <style>
        :host { display: block; flex: 1; position: relative; overflow: hidden; background: #000; border-left: 1px solid #7d9bb5; margin-left: 0; box-sizing: border-box; }
        .wrap { position: absolute; left: -1px; top: 0; right: 0; bottom: 0; }
        .mark { position: absolute; left: 1191px; top: 741px; font: 16.670px/22px "Liberation Mono", monospace; color: rgba(211, 211, 203, .76); white-space: nowrap; }
      </style>
      <div class="wrap">
        ${list.map(i => `<desktop-icon col="${i[0]}" row="${i[1]}" icon="${i[2]}" label="${i[3]}" ${i[4] ? 'shortcut' : ''}></desktop-icon>`).join('')}
        <console-window></console-window>
        <explorer-window></explorer-window>
        <red-mark x="693" y="234" w="262" h="37"></red-mark>
        <red-mark x="647" y="469" w="182" h="29"></red-mark>
        <div class="mark">http://blog.csdn.net/Sky_Of_Love</div>
      </div>`;
  }
}
customElements.define('rdp-desktop', RdpDesktop);
</script>
</body>
</html>
